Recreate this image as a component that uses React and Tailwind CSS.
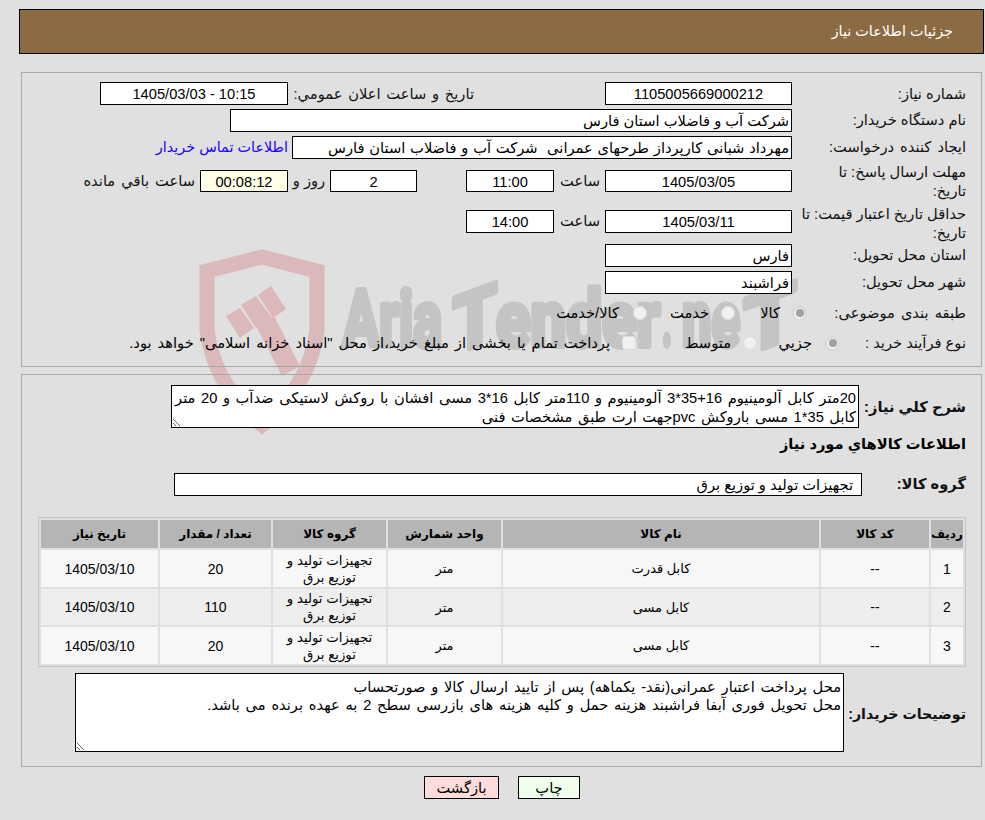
import React from "react";

const font = { fontFamily: '"Liberation Sans","DejaVu Sans",sans-serif' };

function Box({ className = "", children, center, h = "h-[23px]" }) {
  return (
    <div className={`${h} shrink-0 border border-black bg-white leading-[22px] whitespace-nowrap overflow-hidden ${center ? "text-center" : "pr-[2px]"} ${className}`}>
      {children}
    </div>
  );
}
function Label({ className = "", children }) {
  return <div className={`shrink-0 text-[#111] leading-[19px] ${className}`}>{children}</div>;
}
function Radio({ checked }) {
  return checked ? (
    <span className="w-[15px] h-[15px] shrink-0 rounded-full border-2 border-[#d8d8d8] bg-[#f0f0f0] flex items-center justify-center">
      <span className="w-[8px] h-[8px] rounded-full bg-[#a0a0a0]" />
    </span>
  ) : (
    <span className="w-[14px] h-[14px] shrink-0 rounded-full border border-[#dcdcdc] bg-[#f0f0f0]" />
  );
}

function Watermark() {
  return (
    <svg className="absolute left-0 top-0 w-[985px] h-[820px] [direction:ltr]" viewBox="0 0 985 820">
      <path d="M207 271 L262 257 L317 271 L317 330 Q310 385 262 425 Q214 385 207 330 Z" fill="none" stroke="#dbb8ba" strokeWidth="15" />
      <polygon points="226,316 240,308 254,328 240,338" fill="#dbb8ba" />
      <polygon points="241,305 256,296 272,318 256,328" fill="#dbb8ba" />
      <polygon points="258,295 271,286 286,309 273,318" fill="#dbb8ba" />
      <polygon points="256,326 274,316 300,366 282,376" fill="#dbb8ba" />
      <g fill="#c4c4c4" stroke="#c4c4c4" strokeWidth="6" strokeLinejoin="round" fontFamily="Roboto, sans-serif" fontWeight="700" fontSize="78" textAnchor="start">
        <text x="343" y="346" textLength="99" lengthAdjust="spacingAndGlyphs">Aria</text>
        <text x="453" y="346" textLength="44" lengthAdjust="spacingAndGlyphs" transform="translate(0 173) skewY(-20)">T</text>
        <text x="496" y="346" textLength="164" lengthAdjust="spacingAndGlyphs">ender</text>
        <text x="662" y="346" textLength="10" lengthAdjust="spacingAndGlyphs">.</text>
        <text x="682" y="346" textLength="58" lengthAdjust="spacingAndGlyphs">ne</text>
        <text x="744" y="346" textLength="52" lengthAdjust="spacingAndGlyphs" transform="translate(0 280) skewY(-20)">T</text>
      </g>
    </svg>
  );
}

const rows = [
  ["1", "--", "کابل قدرت", "متر", "20", "h-[37px] bg-[#f7f7f7]"],
  ["2", "--", "کابل مسی", "متر", "110", "h-[36px] bg-[#eeeeee]"],
  ["3", "--", "کابل مسی", "متر", "20", "h-[37px] bg-[#f7f7f7]"],
];

export default function App() {
  return (
    <div dir="rtl" style={font} className="relative w-[985px] h-[820px] overflow-hidden bg-[#e0e0e0] text-[14.67px] text-black">
      <Watermark />
      <div className="relative pt-[9px]">
        <header className="mr-[1px] w-[965px] h-[45px] border border-black bg-[#8b6b42] text-white flex items-center pr-[30px] text-[14.4px]">
          جزئیات اطلاعات نیاز
        </header>

        <section className="mt-[18px] mr-[3px] w-[961px] h-[295px] border border-[#a8a8a8] pr-[15px] pt-[9px]">
          <div className="flex items-center h-[23px]">
            <Label className="w-[174px] pt-[2px]">شماره نیاز:</Label>
            <Box center className="w-[187px]">1105005669000212</Box>
            <Label className="mr-[131px] w-[186px] pt-[2px] [word-spacing:1.7px]">تاریخ و ساعت اعلان عمومي:</Label>
            <Box center className="w-[188px]">10:15 - 1405/03/03</Box>
          </div>
          <div className="flex items-center h-[23px] mt-[4px]">
            <Label className="w-[174px]">نام دستگاه خریدار:</Label>
            <Box className="w-[562px]">شرکت آب و فاضلاب استان فارس</Box>
          </div>
          <div className="flex items-center h-[23px] mt-[4px]">
            <Label className="w-[174px] [word-spacing:2px]">ایجاد کننده درخواست:</Label>
            <Box className="w-[500px] [word-spacing:0.7px]">مهرداد شبانی کارپرداز طرحهای عمرانی&nbsp; شرکت آب و فاضلاب استان فارس</Box>
            <a className="mr-[4px] text-[#2200ff] whitespace-nowrap text-[14.4px]">اطلاعات تماس خریدار</a>
          </div>
          <div className="flex items-start h-[39px] mt-[4px]">
            <Label className="w-[174px]">مهلت ارسال پاسخ: تا<br />تاریخ:</Label>
            <Box center h="h-[22px]" className="w-[187px] mt-[7px]">1405/03/05</Box>
            <Label className="w-[51px] mt-[9px] pr-[5px]">ساعت</Label>
            <Box center h="h-[22px]" className="w-[88px] mt-[7px]">11:00</Box>
            <div className="w-[49px]" />
            <Box center h="h-[22px]" className="w-[87px] mt-[7px]">2</Box>
            <Label className="w-[42px] mt-[9px] text-center">روز و</Label>
            <Box center h="h-[22px]" className="w-[88px] mt-[7px] !bg-[#ffffe8]">00:08:12</Box>
            <Label className="mt-[9px] mr-[5px] whitespace-nowrap [word-spacing:2px]">ساعت باقي مانده</Label>
          </div>
          <div className="flex items-start h-[38px] mt-[3px]">
            <Label className="w-[174px]">حداقل تاریخ اعتبار قیمت: تا<br />تاریخ:</Label>
            <Box center className="w-[187px] mt-[5px]">1405/03/11</Box>
            <Label className="w-[51px] mt-[7px] pr-[5px]">ساعت</Label>
            <Box center className="w-[88px] mt-[5px]">14:00</Box>
          </div>
          <div className="flex items-center h-[23px] mt-[1px]">
            <Label className="w-[174px]">استان محل تحویل:</Label>
            <Box className="w-[187px]">فارس</Box>
          </div>
          <div className="flex items-center h-[23px] mt-[4px]">
            <Label className="w-[174px]">شهر محل تحویل:</Label>
            <Box className="w-[187px]">فراشبند</Box>
          </div>
          <div className="flex items-center h-[20px] mt-[9px]">
            <Label className="w-[159px] whitespace-nowrap [word-spacing:2px]">طبقه بندی موضوعی:</Label>
            <div className="flex items-center w-[72px] gap-[12px]"><Radio checked /><span>کالا</span></div>
            <div className="flex items-center w-[88px] gap-[12px]"><Radio /><span>خدمت</span></div>
            <div className="flex items-center gap-[14px]"><Radio /><span>کالا/خدمت</span></div>
          </div>
          <div className="flex items-center h-[20px] mt-[10px]">
            <Label className="w-[126px] whitespace-nowrap">نوع فرآیند خرید :</Label>
            <div className="flex items-center w-[83px] gap-[13px]"><Radio checked /><span>جزيي</span></div>
            <div className="flex items-center w-[121px] gap-[12px]"><Radio /><span>متوسط</span></div>
            <div className="flex items-center gap-[12px]">
              <span className="w-[14px] h-[14px] rounded-[3px] border border-[#dcdcdc] bg-[#f0f0f0]" />
              <span className="whitespace-nowrap [word-spacing:2px]">پرداخت تمام یا بخشی از مبلغ خرید،از محل "اسناد خزانه اسلامی" خواهد بود.</span>
            </div>
          </div>
        </section>

        <section className="mt-[7px] mr-[3px] w-[961px] h-[393px] border border-[#a8a8a8] pr-[15px] pt-[10px]">
          <div className="flex items-center h-[43px]">
            <Label className="w-[107px] font-bold pt-[2px]">شرح کلي نیاز:</Label>
            <textarea
              readOnly
              dir="rtl"
              style={font}
              className="block w-[688px] h-[43px] border border-black bg-white px-[2px] pt-[3px] text-[14.67px] leading-[19px] overflow-hidden outline-none [word-spacing:1.5px]"
              defaultValue={"20متر کابل آلومینیوم 16+35*3 آلومینیوم و 110متر کابل 16*3 مسی افشان با روکش لاستیکی ضدآب و 20 متر\nکابل 35*1 مسی باروکش pvcجهت ارت طبق مشخصات فنی"}
            />
          </div>
          <div className="mt-[7px] h-[19px] font-bold leading-[19px]">اطلاعات کالاهاي مورد نياز</div>
          <div className="flex items-center h-[23px] mt-[19px]">
            <Label className="w-[104px] font-bold">گروه کالا:</Label>
            <Box className="w-[688px] pr-[8px]">تجهیزات تولید و توزیع برق</Box>
          </div>
          <table className="mt-[21px] w-[928px] table-fixed border-separate border-spacing-[2px] border border-[#c4c4c4] text-center">
            <colgroup>
              <col className="w-[32px]" /><col className="w-[108px]" /><col className="w-[316px]" /><col className="w-[113px]" /><col className="w-[113px]" /><col className="w-[111px]" /><col className="w-[117px]" />
            </colgroup>
            <thead>
              <tr className="h-[28px] bg-[#b5b5b5]">
                {["ردیف", "کد کالا", "نام کالا", "واحد شمارش", "گروه کالا", "تعداد / مقدار", "تاریخ نیاز"].map((h) => (
                  <th key={h} className="p-0 font-bold text-[12px] whitespace-nowrap">{h}</th>
                ))}
              </tr>
            </thead>
            <tbody>
              {rows.map((r) => (
                <tr key={r[0]} className={r[5]}>
                  <td className="p-0 pt-[1px] text-[14px]">{r[0]}</td>
                  <td className="p-0 pt-[1px] text-[14px]">{r[1]}</td>
                  <td className="p-0 pt-[1px] text-[13px]">{r[2]}</td>
                  <td className="p-0 pt-[1px] text-[13px]">{r[3]}</td>
                  <td className="p-0 text-[13.3px] leading-[17px]">تجهیزات تولید و<br />توزیع برق</td>
                  <td className="p-0 pt-[1px] text-[14px]">{r[4]}</td>
                  <td className="p-0 pt-[1px] text-[14px]">1405/03/10</td>
                </tr>
              ))}
            </tbody>
          </table>
          <div className="flex items-center h-[79px] mt-[6px]">
            <Label className="w-[122px] font-bold text-[14.2px] pt-[3px]">توضیحات خریدار:</Label>
            <textarea
              readOnly
              dir="rtl"
              style={font}
              className="block w-[769px] h-[79px] border border-black bg-white px-[2px] pt-[4px] text-[14.67px] leading-[18px] overflow-hidden outline-none [word-spacing:1.7px]"
              defaultValue={"محل پرداخت اعتبار عمرانی(نقد- یکماهه) پس از تایید ارسال کالا و صورتحساب\nمحل تحویل فوری آبفا فراشبند هزینه حمل و کلیه هزینه های بازرسی سطح 2 به عهده برنده می باشد."}
            />
          </div>
        </section>

        <div className="flex mt-[9px] mr-[405px] gap-[19px]">
          <button className="w-[62px] h-[23px] border border-black bg-[#efffec] leading-[21px] pt-[1px]">چاپ</button>
          <button className="w-[75px] h-[23px] border border-black bg-[#ffdcdc] leading-[21px] pt-[1px]">بازگشت</button>
        </div>
      </div>
    </div>
  );
}
